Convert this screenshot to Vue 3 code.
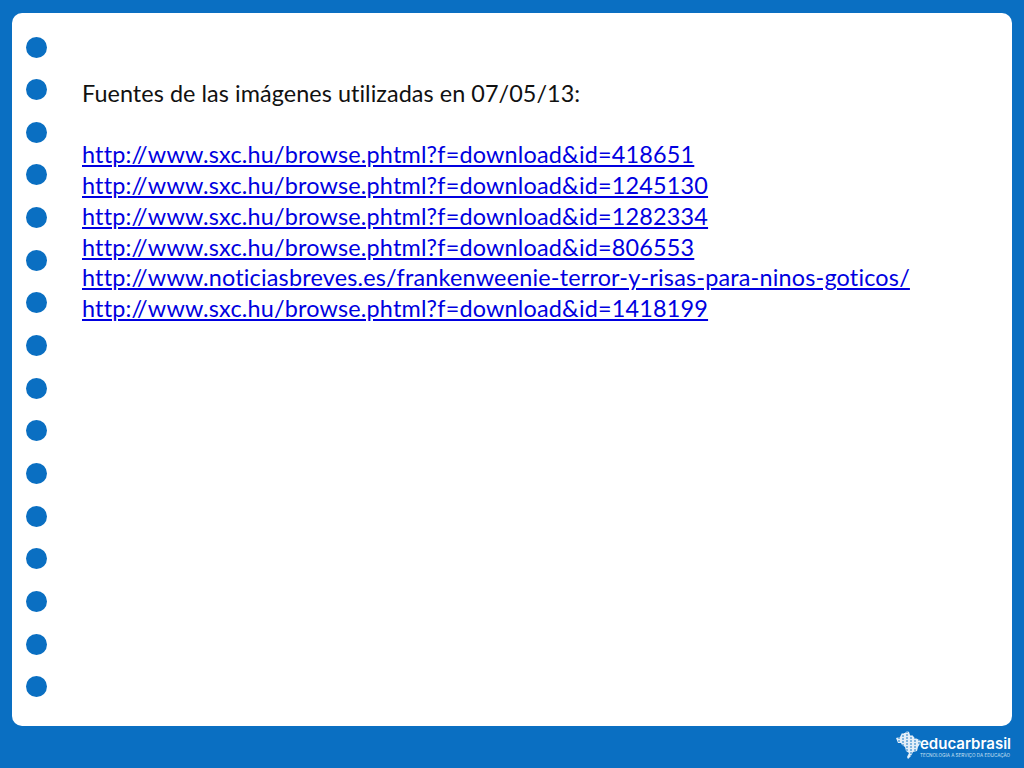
<script setup>
const dots = Array.from({ length: 16 }, (_, i) => i)
const links = [
  'http://www.sxc.hu/browse.phtml?f=download&id=418651',
  'http://www.sxc.hu/browse.phtml?f=download&id=1245130',
  'http://www.sxc.hu/browse.phtml?f=download&id=1282334',
  'http://www.sxc.hu/browse.phtml?f=download&id=806553',
  'http://www.noticiasbreves.es/frankenweenie-terror-y-risas-para-ninos-goticos/',
  'http://www.sxc.hu/browse.phtml?f=download&id=1418199',
]
</script>

<template>
  <div class="slide">
    <main class="card">
      <div class="dots">
        <span v-for="d in dots" :key="d" class="dot"></span>
      </div>
      <section class="content">
        <p class="title">Fuentes de las imágenes utilizadas en 07/05/13:</p>
        <a v-for="l in links" :key="l" class="link" href="#">{{ l }}</a>
      </section>
    </main>
    <footer class="footer">
      <div class="logo">
        <svg class="map" width="25" height="29" viewBox="0 0 25 29">
          <path d="M0 8 L4 7 L6 3 L9 3 L11 1 L13 2 L14 5 L16 5 L19 8 L24 10 L25 12 L22 17 L21 21 L17 22 L15 26 L12 29 L11 27 L13 23 L10 21 L9 17 L6 15 L5 13 L2 13 Z" fill="#e3eef8" />
          <path d="M3 7V14M7 2V16M11 1V22M15 4V26M19 7V23M23 9V15" stroke="#0a6fc2" stroke-width="0.9" stroke-dasharray="2 1" />
        </svg>
        <div class="brand">
          <div class="name">educarbrasil</div>
          <div class="tag">TECNOLOGIA A SERVIÇO DA EDUCAÇÃO</div>
        </div>
      </div>
    </footer>
  </div>
</template>

<style scoped>
.slide {
  width: 1024px;
  height: 768px;
  box-sizing: border-box;
  padding: 13px 12px 0;
  background: #0a6fc2;
  display: flex;
  flex-direction: column;
  overflow: hidden;
}
.card {
  height: 713px;
  flex: none;
  display: flex;
  background: #fff;
  border-radius: 10px;
}
.dots {
  width: 70px;
  flex: none;
  box-sizing: border-box;
  padding: 23.5px 0 0 14px;
  display: flex;
  flex-direction: column;
  gap: 21.67px;
}
.dot {
  width: 21px;
  height: 21px;
  border-radius: 50%;
  background: #0a6fc2;
}
.content {
  padding-top: 65px;
  display: flex;
  flex-direction: column;
  align-items: flex-start;
  font-family: Lato, "Liberation Sans", sans-serif;
  font-size: 23.4px;
  font-variant-ligatures: none;
  line-height: 30.7px;
}
.title {
  margin: 0 0 30.7px;
  color: #111;
  letter-spacing: 0.06px;
}
.link {
  color: #0000e0;
  text-decoration: underline;
  white-space: nowrap;
  letter-spacing: 0.19px;
}
.footer {
  flex: 1;
  display: flex;
  justify-content: flex-end;
  align-items: flex-start;
  padding-top: 4px;
}
.logo {
  display: flex;
  align-items: flex-start;
  font-family: Inter, "Liberation Sans", sans-serif;
  color: #fff;
}
.map {
  margin-right: -1px;
}
.brand {
  width: 92px;
  padding-top: 5px;
}
.name {
  font-size: 15px;
  line-height: 18px;
  font-weight: 600;
  white-space: nowrap;
}
.tag {
  font-size: 4.6px;
  line-height: 6px;
  color: #cfe2f3;
  white-space: nowrap;
}
</style>
